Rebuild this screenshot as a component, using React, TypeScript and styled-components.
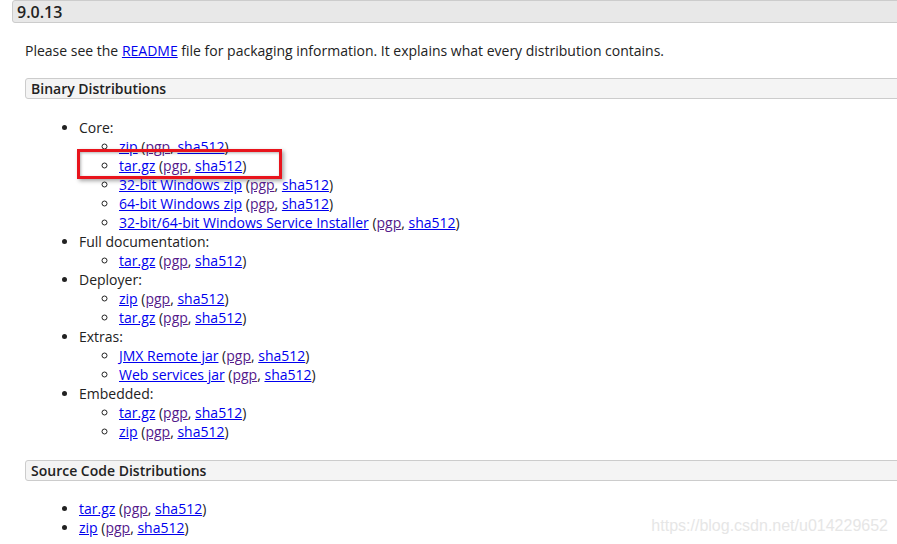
import React from 'react';
import styled, { createGlobalStyle } from 'styled-components';

const GlobalStyle = createGlobalStyle`
	html, body {
		margin: 0;
		padding: 0;
		background: #fff;
		overflow: hidden;
	}
	body {
		font-family: 'Open Sans', 'Liberation Sans', sans-serif;
		font-size: 14px;
		line-height: 19px;
		color: #222;
	}
`;

const Page = styled.div`
	position: relative;
	width: 897px;
	height: 544px;
	overflow: hidden;
	padding-left: 12px;
	box-sizing: border-box;
`;

const VersionHeader = styled.h3`
	margin: 0;
	height: 23px;
	box-sizing: border-box;
	width: 920px;
	padding: 1px 4px 0;
	background: #e8e8e8;
	border: 1px solid #ccc;
	border-radius: 3px;
	font-size: 16px;
	font-weight: 600;
	line-height: 20px;
	color: #222;
`;

const Section = styled.div`
	padding-left: 13px;
`;

const Paragraph = styled.p`
	margin: 18px 0 18px;
`;

const Link = styled.a<{ visited?: boolean }>`
	color: ${({ visited }) => (visited ? '#551a8b' : '#0000ee')};
	text-decoration: underline;
`;

const SubHeader = styled.h4`
	margin: 0;
	height: 21px;
	box-sizing: border-box;
	width: 900px;
	padding: 0 5px;
	background: #f4f4f4;
	border: 1px solid #ccc;
	border-radius: 3px;
	font-size: 14px;
	font-weight: 600;
	line-height: 19px;
	color: #222;
`;

const List = styled.ul<{ spaceBefore?: number; spaceAfter?: number }>`
	margin: ${({ spaceBefore }) => spaceBefore ?? 20}px 0 ${({ spaceAfter }) => spaceAfter ?? 0}px;
	padding-left: 54px;
	list-style-type: disc;
`;

const SubList = styled.ul`
	margin: 0;
	padding-left: 40px;
	list-style-type: circle;
`;

const Item = styled.li`
	position: relative;
`;

const Highlight = styled.span`
	position: absolute;
	left: -42px;
	top: -7px;
	width: 205px;
	height: 30px;
	box-sizing: border-box;
	border: 3px solid #e8141c;
	box-shadow: 2px 2px 4px rgba(0, 0, 0, 0.35), inset 1px 1px 3px rgba(0, 0, 0, 0.3);
	pointer-events: none;
`;

const Watermark = styled.div`
	position: absolute;
	right: 9px;
	bottom: 9px;
	font-family: 'Liberation Sans', Arial, sans-serif;
	font-size: 16px;
	color: #e6e6e6;
`;

type Dist = { name: string; highlight?: boolean };

const Download: React.FC<Dist> = ({ name, highlight }) => (
	<Item>
		{highlight && <Highlight />}
		<Link href="#">{name}</Link> (<Link href="#" visited>pgp</Link>, <Link href="#">sha512</Link>)
	</Item>
);

const groups: { label: string; items: Dist[] }[] = [
	{
		label: 'Core:',
		items: [
			{ name: 'zip' },
			{ name: 'tar.gz', highlight: true },
			{ name: '32-bit Windows zip' },
			{ name: '64-bit Windows zip' },
			{ name: '32-bit/64-bit Windows Service Installer' },
		],
	},
	{ label: 'Full documentation:', items: [{ name: 'tar.gz' }] },
	{ label: 'Deployer:', items: [{ name: 'zip' }, { name: 'tar.gz' }] },
	{ label: 'Extras:', items: [{ name: 'JMX Remote jar' }, { name: 'Web services jar' }] },
	{ label: 'Embedded:', items: [{ name: 'tar.gz' }, { name: 'zip' }] },
];

export default function App() {
	return (
		<>
			<GlobalStyle />
			<Page>
				<VersionHeader>9.0.13</VersionHeader>
				<Section>
					<Paragraph>
						Please see the <Link href="#">README</Link> file for packaging information. It explains what every
						distribution contains.
					</Paragraph>
					<SubHeader>Binary Distributions</SubHeader>
					<List spaceBefore={19} spaceAfter={19}>
						{groups.map((g) => (
							<li key={g.label}>
								{g.label}
								<SubList>
									{g.items.map((d, i) => (
										<Download key={i} {...d} />
									))}
								</SubList>
							</li>
						))}
					</List>
					<SubHeader>Source Code Distributions</SubHeader>
					<List spaceBefore={18}>
						<Download name="tar.gz" />
						<Download name="zip" />
					</List>
				</Section>
				<Watermark>https://blog.csdn.net/u014229652</Watermark>
			</Page>
		</>
	);
}
